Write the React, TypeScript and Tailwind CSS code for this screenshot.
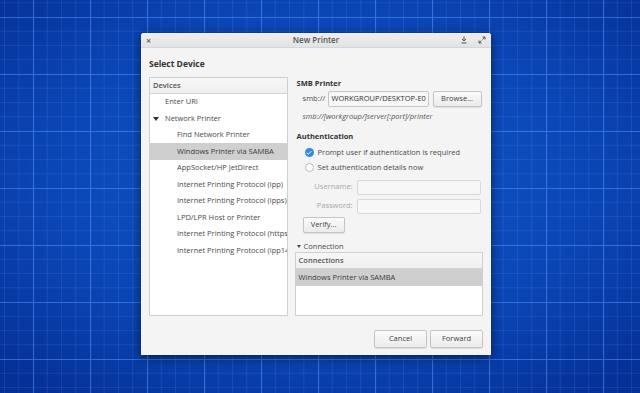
import { Check } from 'lucide-react';

const devices: { label: string; indent: number; selected?: boolean; expander?: boolean }[] = [
  { label: 'Enter URI', indent: 1 },
  { label: 'Network Printer', indent: 1, expander: true },
  { label: 'Find Network Printer', indent: 2 },
  { label: 'Windows Printer via SAMBA', indent: 2, selected: true },
  { label: 'AppSocket/HP JetDirect', indent: 2 },
  { label: 'Internet Printing Protocol (ipp)', indent: 2 },
  { label: 'Internet Printing Protocol (ipps)', indent: 2 },
  { label: 'LPD/LPR Host or Printer', indent: 2 },
  { label: 'Internet Printing Protocol (https)', indent: 2 },
  { label: 'Internet Printing Protocol (ipp14)', indent: 2 },
];

function Wallpaper() {
  return (
    <svg className="absolute inset-0" width="640" height="393">
      <defs>
        <radialGradient id="bg" cx="50%" cy="45%" r="70%">
          <stop offset="0%" stopColor="#1258cc" />
          <stop offset="60%" stopColor="#0b46b6" />
          <stop offset="100%" stopColor="#053096" />
        </radialGradient>
        <pattern id="grid" patternUnits="userSpaceOnUse" x="33" y="17" width="57" height="57">
          <path d="M14.25 0V57M28.5 0V57M42.75 0V57M0 14.25H57M0 28.5H57M0 42.75H57" stroke="rgba(120,170,255,0.13)" strokeWidth="1" />
          <path d="M0.5 0V57M0 0.5H57" stroke="rgba(90,160,255,0.5)" strokeWidth="1.2" />
        </pattern>
      </defs>
      <rect width="640" height="393" fill="url(#bg)" />
      <rect width="640" height="393" fill="url(#grid)" />
    </svg>
  );
}

function Button({ label, className = '' }: { label: string; className?: string }) {
  return (
    <div
      className={`flex items-center justify-center rounded-[2px] border border-[#c4c4c4] bg-gradient-to-b from-[#fafafa] to-[#ececec] text-[#444] shadow-[0_1px_1px_rgba(0,0,0,0.08)] ${className}`}
    >
      {label}
    </div>
  );
}

export default function App() {
  return (
    <div
      className="relative h-[393px] w-[640px] overflow-hidden"
      style={{ fontFamily: '"Open Sans", "Noto Sans", sans-serif' }}
    >
      <Wallpaper />
      <div className="relative pl-[141px] pt-[33px]">
        <div className="flex h-[322px] w-[350px] flex-col overflow-hidden rounded-t-[3px] bg-[#f4f4f4] text-[7.5px] text-[#4a4a4a] shadow-[0_2px_12px_rgba(0,0,0,0.55)]">
          {/* title bar */}
          <div className="flex h-[15px] shrink-0 items-center border-b border-[#d6d6d6] bg-gradient-to-b from-[#efefef] to-[#e3e3e3] px-[5px]">
            <span className="w-[30px] text-[9px] font-bold leading-none text-[#666]">×</span>
            <span className="flex-1 text-center text-[8px] font-semibold text-[#555]">New Printer</span>
            <div className="flex w-[30px] items-center justify-end">
              <svg width="8" height="8" viewBox="0 0 8 8" className="mr-[10px] text-[#555]">
                <path d="M4 0.5V5M2 3L4 5L6 3M1.5 7H6.5" stroke="currentColor" strokeWidth="1" fill="none" />
              </svg>
              <svg width="8" height="8" viewBox="0 0 8 8" className="text-[#555]">
                <path d="M4.5 1H7V3.5M7 1L4.5 3.5M3.5 7H1V4.5M1 7L3.5 4.5" stroke="currentColor" strokeWidth="1" fill="none" />
              </svg>
            </div>
          </div>

          {/* body */}
          <div className="flex flex-1 flex-col px-[8px]">
            <div className="mt-[10px] text-[8.5px] font-bold text-[#333]">Select Device</div>

            <div className="mt-[6px] flex gap-[7px]">
              {/* device list */}
              <div className="flex h-[239px] w-[139px] flex-col overflow-hidden border border-[#cfcfcf] bg-white">
                <div className="flex h-[16px] shrink-0 items-center border-b border-[#d4d4d4] bg-gradient-to-b from-[#f7f7f7] to-[#efefef] pl-[3px] font-semibold text-[#555]">
                  Devices
                </div>
                {devices.map((d) => (
                  <div
                    key={d.label}
                    className={`flex h-[16.5px] shrink-0 items-center whitespace-nowrap ${
                      d.selected ? 'bg-[#cfcfcf] text-[#3a3a3a]' : ''
                    } ${d.indent === 1 ? 'pl-[15px]' : 'pl-[27px]'}`}
                  >
                    {d.expander && (
                      <span className="-ml-[12px] mr-[6px] inline-block h-0 w-0 border-x-[3px] border-t-[4px] border-x-transparent border-t-[#333]" />
                    )}
                    {d.label}
                  </div>
                ))}
              </div>

              {/* right panel */}
              <div className="flex w-[189px] flex-col">
                <div className="ml-[2px] mt-[1px] font-bold text-[#333]">SMB Printer</div>
                <div className="mt-[2px] flex items-center">
                  <span className="ml-[8px] w-[25px]">smb://</span>
                  <div className="flex h-[16px] w-[101px] items-center overflow-hidden whitespace-nowrap rounded-[2px] border border-[#c6c6c6] bg-[#f7f7f7] pl-[3px] text-[#333]">
                    WORKGROUP/DESKTOP-E0
                  </div>
                  <Button label="Browse..." className="ml-[4px] h-[16px] w-[49px] border-[#8fb2e0]" />
                </div>
                <div className="ml-[8px] mt-[4px] italic text-[#555]">smb://[workgroup/]server[:port]/printer</div>

                <div className="ml-[2px] mt-[9px] font-bold text-[#333]">Authentication</div>
                <div className="ml-[10px] mt-[3px] flex h-[14px] items-center">
                  <span className="flex h-[9px] w-[9px] items-center justify-center rounded-full bg-[#3689e6]">
                    <Check size={6} strokeWidth={4} color="white" />
                  </span>
                  <span className="ml-[4px]">Prompt user if authentication is required</span>
                </div>
                <div className="ml-[10px] mt-[1px] flex h-[14px] items-center">
                  <span className="h-[9px] w-[9px] rounded-full border border-[#b8b8b8] bg-white" />
                  <span className="ml-[4px]">Set authentication details now</span>
                </div>
                <div className="mt-[5px] flex items-center">
                  <span className="w-[62px] pr-[4px] text-right text-[#a8a8a8]">Username:</span>
                  <div className="h-[15px] w-[124px] rounded-[2px] border border-[#d8d8d8] bg-[#f7f7f7]" />
                </div>
                <div className="mt-[4px] flex items-center">
                  <span className="w-[62px] pr-[4px] text-right text-[#a8a8a8]">Password:</span>
                  <div className="h-[15px] w-[124px] rounded-[2px] border border-[#d8d8d8] bg-[#f7f7f7]" />
                </div>
                <Button label="Verify..." className="ml-[8px] mt-[3px] h-[16px] w-[42px]" />

                <div className="mt-[8px] flex items-center">
                  <span className="ml-[2px] mr-[3px] inline-block h-0 w-0 border-x-[2px] border-t-[3px] border-x-transparent border-t-[#444]" />
                  Connection
                </div>
                <div className="flex h-[64px] flex-col border border-[#cfcfcf] bg-white">
                  <div className="flex h-[16px] shrink-0 items-center border-b border-[#d4d4d4] bg-gradient-to-b from-[#f7f7f7] to-[#efefef] pl-[3px] font-semibold text-[#555]">
                    Connections
                  </div>
                  <div className="flex h-[17px] items-center bg-[#cfcfcf] pl-[3px] text-[#3a3a3a]">
                    Windows Printer via SAMBA
                  </div>
                </div>
              </div>
            </div>

            <div className="mt-[14px] flex justify-end gap-[3px]">
              <Button label="Cancel" className="h-[18px] w-[53px]" />
              <Button label="Forward" className="h-[18px] w-[53px]" />
            </div>
          </div>
        </div>
      </div>
    </div>
  );
}
